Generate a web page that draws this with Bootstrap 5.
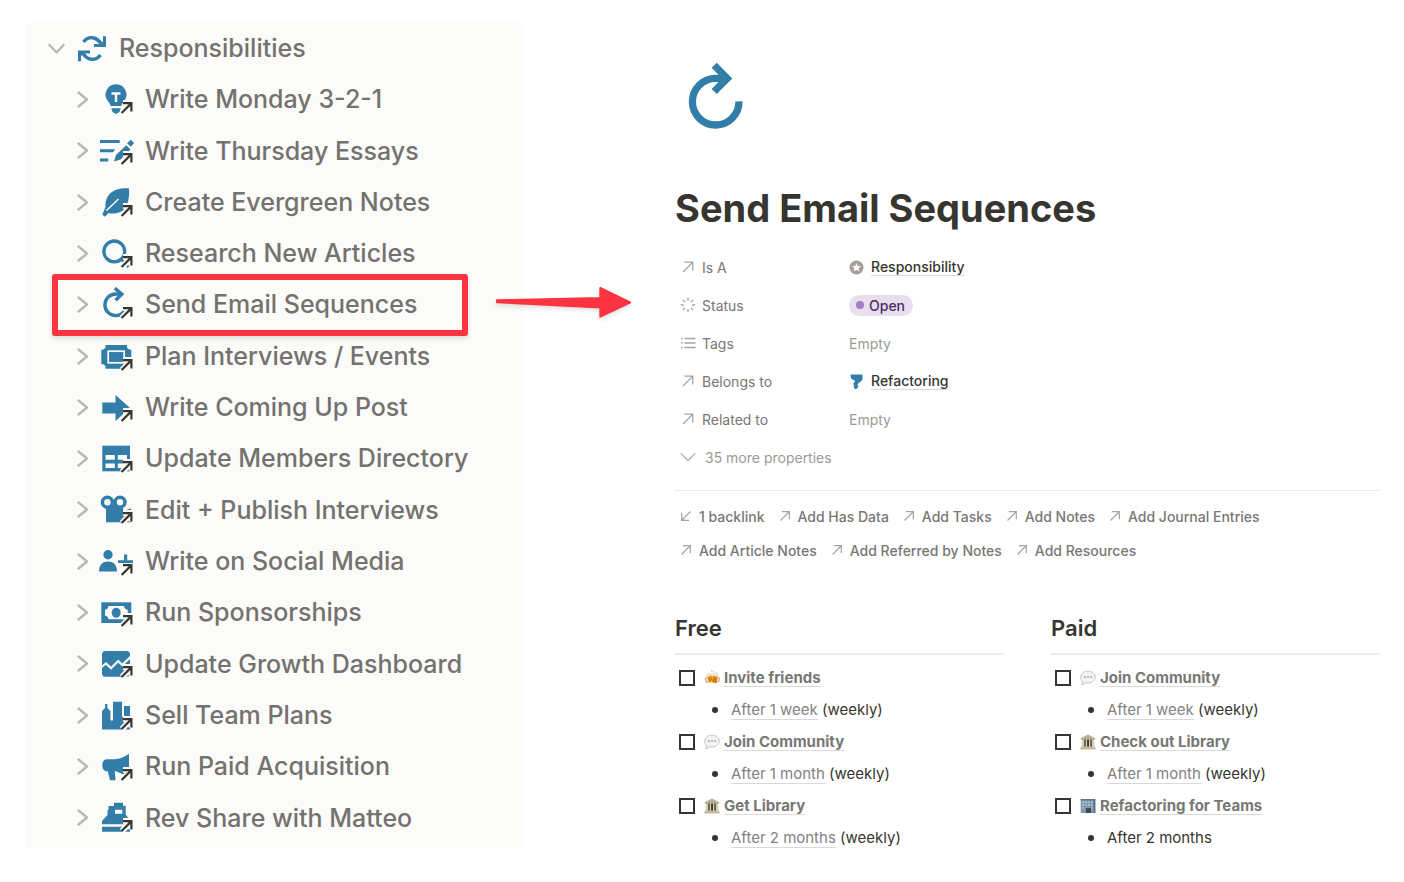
<!DOCTYPE html>
<html lang="en">
<head>
<meta charset="utf-8">
<meta name="viewport" content="width=device-width, initial-scale=1">
<title>Send Email Sequences</title>
<link href="https://cdn.jsdelivr.net/npm/bootstrap@5.3.0/dist/css/bootstrap.min.css" rel="stylesheet">
<style>
  :root { --ink: #37352f; --soft: #787774; --faint: #9b9a97; --blue: #337ea9; --side: #fbfbfa; --line: #ebebea; --alert: #fc3441; }
  body { font-family: Inter, "Liberation Sans", sans-serif; color: var(--ink); background: #fff; font-size: 15px; }
  a { color: inherit; text-decoration: none; }
  svg { flex: none; display: block; }
  .workspace { display: grid; grid-template-columns: 497fr 150fr 706fr; padding: 23px 24px 0 27px; }
  .tree { background: var(--side); align-self: start; min-height: calc(100vh - 57px); padding-bottom: 4px; font-size: 25px; font-weight: 500; color: #73726e; }
  .tree-row { flex: 1 1 0; min-height: 42px; padding-left: 45px; white-space: nowrap; }
  .tree-row.root-row { padding-left: 17px; }
  .toggle { border: 0; padding: 0; background: none; width: 20px; margin-right: 6px; }
  .tree-row a { display: flex; align-items: center; gap: 11px; }
  .root-row a { margin-left: 7px; gap: 12px; }
  .blue { fill: var(--blue); stroke: none; }
  .blue-line { fill: none; stroke: var(--blue); }
  .gap-fill { fill: var(--side); }
  .gap-line { fill: none; stroke: var(--side); }
  .callout-box { position: absolute; inset: -6px 56px -5px 25px; border: 6px solid var(--alert); border-radius: 3px; box-shadow: 0 2px 5px rgba(0,0,0,.14); pointer-events: none; }
  .callout-arrow { position: absolute; left: calc(100% - 29px); top: 5px; filter: drop-shadow(0 2px 2px rgba(0,0,0,.14)); }
  .doc { grid-column: 3; padding-top: 39px; }
  .doc-icon { margin-left: 14px; }
  .doc h1 { font-size: 38px; line-height: 48px; font-weight: 700; margin: 54px 0 16px 1px; }
  .props { margin: 0 0 14px; font-size: 14px; }
  .prop { display: grid; grid-template-columns: 169px 1fr; align-items: center; height: 38px; margin-left: 6px; }
  .prop dt { font-weight: 400; color: var(--soft); display: flex; align-items: center; gap: 6px; }
  .prop dd { margin: 0; display: flex; align-items: center; gap: 7px; font-weight: 500; }
  .prop dd.blank { font-weight: 400; color: var(--faint); }
  .prop dd a { line-height: 16px; }
  .under { border-bottom: 1px solid #d9d9d7; }
  .more { border: 0; background: none; padding: 0; height: 38px; margin-left: 6px; color: var(--faint); gap: 9px; }
  .pill { background: #e8deee; color: #492f64; height: 21px; padding: 0 8px 0 7px; border-radius: 11px; gap: 5px; font-weight: 500; }
  .dot { width: 8px; height: 8px; border-radius: 50%; background: #a27ec7; }
  .links { border-top: 1px solid var(--line); padding: 8px 0 0 6px; column-gap: 14px; font-size: 14px; font-weight: 500; color: var(--soft); }
  .links a { display: flex; align-items: center; gap: 7px; height: 34px; }
  .lists { display: grid; grid-template-columns: 1fr 1fr; gap: 46px; margin-top: 46px; }
  .lists h2 { font-size: 22px; line-height: 30px; font-weight: 600; margin: 0 0 7px; padding: 0 0 10px 1px; border-bottom: 2px solid #ededec; }
  .task { display: flex; align-items: center; height: 32px; padding-left: 5px; }
  .task input { appearance: none; width: 16px; height: 16px; border: 2px solid var(--ink); margin: 0 9px 0 0; border-radius: 0; }
  .task a { color: var(--soft); font-weight: 700; margin-left: 4px; line-height: 17px; }
  .step { margin: 0; padding-left: 57px; list-style: none; height: 32px; line-height: 32px; }
  .step li { position: relative; white-space: nowrap; }
  .step li::before { content: ""; position: absolute; left: -19px; top: 13px; width: 6px; height: 6px; border-radius: 50%; background: var(--ink); }
  .step a { color: #83827f; }
</style>
</head>
<body>
<svg width="0" height="0" class="position-absolute" aria-hidden="true">
  <symbol id="chev" viewBox="0 0 20 20"><path d="M6.500 2.500l8.500 7-8.500 7" fill="none" stroke="#b9b8b5" stroke-width="2.400" stroke-linejoin="round" stroke-linecap="round"/></symbol>
  <symbol id="badge" viewBox="0 0 36 36">
    <path d="M24 31L33.2 21.5M25 21H33.5V29.5" fill="none" stroke="#fbfbfa" stroke-width="6"/>
    <path d="M23.6 31L33 21.6M25 21.2H33.4V29.5" fill="none" stroke="#3a3733" stroke-width="2.2"/>
  </symbol>
  <symbol id="ne" viewBox="0 0 16 16"><path d="M3 13L12.5 3.5M4.5 3.2H12.8V11.5" fill="none" stroke="#a5a4a1" stroke-width="1.3"/></symbol>
  <symbol id="ne-s" viewBox="0 0 12 12"><path d="M1.500 10.500L10 2M2.800 1.700H10.300V9.200" fill="none" stroke="#a5a4a1" stroke-width="1.200"/></symbol>
  <symbol id="chat" viewBox="0 0 16 16"><path d="M8 1.200c4.200 0 7.300 2.600 7.300 5.900S12.200 13 8 13c-.8 0-1.600-.1-2.300-.3C4.800 13.800 3.400 14.700 1.800 14.800c.7-.9 1-1.900.9-3.200C1.400 10.500.7 8.900.7 7.100.7 3.800 3.800 1.200 8 1.200z" fill="#f4f4f4" stroke="#bdbdbd" stroke-width=".9"/><g fill="#666"><circle cx="5" cy="7" r=".8"/><circle cx="8" cy="7" r=".8"/><circle cx="11" cy="7" r=".8"/></g></symbol>
  <symbol id="library" viewBox="0 0 16 16"><path d="M8 .5L15.300 4.300V5.500H.7V4.300z" fill="#b8af94"/><rect x="2" y="5.500" width="12" height="7.500" fill="#3d382d"/><path d="M1.700 5.500h2.600v7.500H1.700zM5.700 5.500h1.400v7.500H5.700zM9 5.500h1.400v7.500H9zM11.800 5.500h2.600v7.500h-2.600z" fill="#d8cfb2"/><path d="M1.200 12.600h13.600v1.200h.9v1.700H.3v-1.700h.9z" fill="#c3baa0"/></symbol>
  <symbol id="beer" viewBox="0 0 16 16"><path d="M2.500 6l5-1.800 2.300 6.800-5 2z" fill="#f0a024"/><path d="M8.800 5l5.200 1.200-1.400 7.300-5-1.200z" fill="#e8901c"/><path d="M1.800 6.300C1 4.500 3.500 2.300 7.800 3.300l.2 1.900-5.500 2z" fill="#f3e4cc"/><path d="M8.300 4.500C9 1.500 13.500 1.500 14.800 4l-.5 2.900-5.600-1.300z" fill="#f3e6d0"/><path d="M3 8l-1.800.8 1.300 3.400 2-.7M13.800 7.800l1.700.4-.7 3.300-1.700-.3" fill="none" stroke="#c9a77c" stroke-width="1.100"/><path d="M4.800 7.600l1.300 4M6.500 7l.9 3M10.400 7.500L9.700 12M12.200 8l-.7 4.500" stroke="#a8640f" stroke-width=".8"/><path d="M7.500.5l.3 1.300M9.800.5l-.7 1.200" stroke="#d8a350" stroke-width=".8"/></symbol>
  <symbol id="office" viewBox="0 0 16 16"><path d="M.7 1h14.600v14H.7z" fill="#7e96ac"/><path d="M.7 1h14.600v1.300H.7z" fill="#66737f"/><path d="M2.500 3.500H4v1.500H2.500zM5.200 3.500h1.500v1.500H5.200zM8 3.500h1.500v1.500H8zM11 3.500h1.500v1.500H11zM2.500 6.300H4v1.500H2.500zM5.200 6.300h1.500v1.500H5.200zM8 6.300h1.500v1.500H8zM11 6.300h1.500v1.500H11zM2.500 9.200H4v1.500H2.500zM11 9.200h1.500v1.500H11z" fill="#bcd4e8"/><path d="M6 10h5v5H6z" fill="#3f4b57"/><path d="M13.500 2.300h1.800V15h-1.800z" fill="#5d6f80"/></symbol>
</svg>

<div class="workspace">
  <nav class="tree d-flex flex-column" aria-label="Pages">
    <div class="tree-row root-row d-flex align-items-center">
      <button class="toggle" type="button" aria-label="Collapse Responsibilities" aria-expanded="true"><svg width="24" height="20" viewBox="0 0 24 20"><path d="M5.500 6l7 7.500L19.500 6" fill="none" stroke="#b9b8b5" stroke-width="2.400" stroke-linejoin="round" stroke-linecap="round"/></svg></button>
      <a href="#"><svg width="30" height="30" viewBox="0 0 30 30"><g class="blue-line" stroke-width="3.400"><path d="M6.500 8C11 2 19 2 24 9.500"/><path d="M24 20C19 27 11 27 6.500 21.500" transform="matrix(-1 0 0 1 30 0)" opacity="0"/><path d="M6 19.500C11 27 19 27 23.500 21"/></g><path class="blue" d="M26 2.300h3V13H17v-3h6.500L26 7.500zM4 27.300H1V16.600h12v3H6.500L4 22.100z"/></svg>Responsibilities</a>
    </div>
    <div class="tree-row d-flex align-items-center">
      <button class="toggle" type="button" aria-label="Expand Write Monday 3-2-1"><svg width="20" height="20"><use href="#chev"/></svg></button>
      <a href="#"><svg width="36" height="36" viewBox="0 0 36 36"><path class="blue" d="M18 2.300a10.400 10.400 0 0 1 7.600 17.500c-1.500 1.700-1.900 2.600-2.100 4.200h-11c-.2-1.600-.6-2.500-2.100-4.200A10.400 10.400 0 0 1 18 2.300zM13.300 26.300h9.400l-1.200 3.600-3.500 2-3.500-2z"/><path class="gap-line" d="M13.500 11.500h9M18 11.500v8.500" stroke-width="2.400"/><use href="#badge"/></svg>Write Monday 3-2-1</a>
    </div>
    <div class="tree-row d-flex align-items-center">
      <button class="toggle" type="button" aria-label="Expand Write Thursday Essays"><svg width="20" height="20"><use href="#chev"/></svg></button>
      <a href="#"><svg width="36" height="36" viewBox="0 0 36 36"><path class="blue" d="M2 7h19.700v3H2zM2 16.300h15l-2 3H2zM2 25.400h8.300v3H2zM16 28.500l2-6.500L28.300 12.300l4.200 4.300L22.500 26.500zM33 6.800l3 3.400-3.200 3.600-3.800-3.600z"/><use href="#badge"/></svg>Write Thursday Essays</a>
    </div>
    <div class="tree-row d-flex align-items-center">
      <button class="toggle" type="button" aria-label="Expand Create Evergreen Notes"><svg width="20" height="20"><use href="#chev"/></svg></button>
      <a href="#"><svg width="36" height="36" viewBox="0 0 36 36"><path class="blue" d="M31 3.500C19 2.500 7 7 7.500 22L4.300 29.500 6.800 31.800 10.500 28C16 29.500 26 28 29 20.500 31 14 31.500 9 31 3.500z"/><path class="gap-line" d="M8.500 25.500L20.500 14" stroke-width="1.500"/><use href="#badge"/></svg>Create Evergreen Notes</a>
    </div>
    <div class="tree-row d-flex align-items-center">
      <button class="toggle" type="button" aria-label="Expand Research New Articles"><svg width="20" height="20"><use href="#chev"/></svg></button>
      <a href="#"><svg width="36" height="36" viewBox="0 0 36 36"><circle class="blue-line" cx="16.300" cy="15.400" r="10.400" stroke-width="3.300"/><path class="blue-line" d="M23 23l7.500 8" stroke-width="3"/><use href="#badge"/></svg>Research New Articles</a>
    </div>
    <div class="tree-row d-flex align-items-center position-relative">
      <button class="toggle" type="button" aria-label="Expand Send Email Sequences"><svg width="20" height="20"><use href="#chev"/></svg></button>
      <a href="#"><svg width="36" height="36" viewBox="0 0 36 36"><g class="blue-line" stroke-width="3.400"><path d="M28.500 18A10.800 10.800 0 1 1 17.700 7H23.500"/><path d="M16.800 1.200L23.800 7 17.600 13.200"/></g><use href="#badge"/></svg>Send Email Sequences</a>
      <span class="callout-box"></span>
      <svg class="callout-arrow" width="138" height="36" viewBox="0 0 138 36" aria-hidden="true"><path d="M2 15.300L105.300 13V3L135 17.500 105.300 31.700V22.500L2 17.300z" fill="#fc3441" stroke="#fc3441" stroke-width="2" stroke-linejoin="round"/></svg>
    </div>
    <div class="tree-row d-flex align-items-center">
      <button class="toggle" type="button" aria-label="Expand Plan Interviews / Events"><svg width="20" height="20"><use href="#chev"/></svg></button>
      <a href="#"><svg width="36" height="36" viewBox="0 0 36 36"><path class="blue" d="M7.500 6h21.500v2.500l1.500 1.800 2.800.5V25l-2.800.6-1.500 1.700v2.400H7.500v-2.400L6 25.600 3.300 25V10.800L6 10.300l1.500-1.800z"/><rect class="gap-line" x="10.200" y="12.200" width="16" height="11.600" stroke-width="1.700"/><use href="#badge"/></svg>Plan Interviews / Events</a>
    </div>
    <div class="tree-row d-flex align-items-center">
      <button class="toggle" type="button" aria-label="Expand Write Coming Up Post"><svg width="20" height="20"><use href="#chev"/></svg></button>
      <a href="#"><svg width="36" height="36" viewBox="0 0 36 36"><path class="blue" d="M4.300 12.500H17.500V5L32 18 17.500 31V23.500H4.300z"/><use href="#badge"/></svg>Write Coming Up Post</a>
    </div>
    <div class="tree-row d-flex align-items-center">
      <button class="toggle" type="button" aria-label="Expand Update Members Directory"><svg width="20" height="20"><use href="#chev"/></svg></button>
      <a href="#"><svg width="36" height="36" viewBox="0 0 36 36"><path class="blue" d="M4.300 4.700H32V30.300H4.300z"/><path class="gap-fill" d="M7.500 14h9.300v4.700H7.500zM19.800 14H29v4.700h-9.200zM7.500 22.400h9.300v4.700H7.500zM19.800 22.400H29v4.700h-9.200z"/><use href="#badge"/></svg>Update Members Directory</a>
    </div>
    <div class="tree-row d-flex align-items-center">
      <button class="toggle" type="button" aria-label="Expand Edit + Publish Interviews"><svg width="20" height="20"><use href="#chev"/></svg></button>
      <a href="#"><svg width="36" height="36" viewBox="0 0 36 36"><path class="blue" d="M8 14.500L12 13h8l5.500 1.500V18L33 16.500V30.200H8z"/><circle class="blue" cx="9.400" cy="10.200" r="6.700"/><circle class="blue" cx="22" cy="10.200" r="6.700"/><g class="gap-fill"><circle cx="9.400" cy="10.200" r="3.200"/><circle cx="22" cy="10.200" r="3.200"/></g><path class="gap-line" d="M27.500 15v7" stroke-width="4"/><use href="#badge"/></svg>Edit + Publish Interviews</a>
    </div>
    <div class="tree-row d-flex align-items-center">
      <button class="toggle" type="button" aria-label="Expand Write on Social Media"><svg width="20" height="20"><use href="#chev"/></svg></button>
      <a href="#"><svg width="36" height="36" viewBox="0 0 36 36"><circle class="blue" cx="10" cy="10.800" r="4.700"/><path class="blue" d="M1 27.500C1 20.500 4.800 17.400 10 17.400s9 3.100 9 10.100z"/><use href="#badge"/><path class="blue" d="M20 16.300h6V10.500h3.200v5.800H35V19H20z"/></svg>Write on Social Media</a>
    </div>
    <div class="tree-row d-flex align-items-center">
      <button class="toggle" type="button" aria-label="Expand Run Sponsorships"><svg width="20" height="20"><use href="#chev"/></svg></button>
      <a href="#"><svg width="36" height="36" viewBox="0 0 36 36"><path class="blue" d="M3.300 7.300h30V28h-30z"/><path class="gap-fill" d="M10.500 11h15.500c.3 2.200 1.500 3.400 3.700 3.700v6.100c-2.200.3-3.400 1.300-3.700 3.500H10.500c-.3-2.200-1.300-3.200-3.500-3.500v-6.100c2.200-.3 3.200-1.500 3.500-3.700z"/><ellipse class="blue" cx="18.200" cy="17.700" rx="4.500" ry="5"/><use href="#badge"/></svg>Run Sponsorships</a>
    </div>
    <div class="tree-row d-flex align-items-center">
      <button class="toggle" type="button" aria-label="Expand Update Growth Dashboard"><svg width="20" height="20"><use href="#chev"/></svg></button>
      <a href="#"><svg width="36" height="36" viewBox="0 0 36 36"><rect class="blue" x="4" y="5" width="28" height="25.700" rx="3.500"/><path class="gap-line" d="M3.500 21L8 17.500l5 4.800L20.200 15l4 4L33 10.500" stroke-width="2.200"/><use href="#badge"/></svg>Update Growth Dashboard</a>
    </div>
    <div class="tree-row d-flex align-items-center">
      <button class="toggle" type="button" aria-label="Expand Sell Team Plans"><svg width="20" height="20"><use href="#chev"/></svg></button>
      <a href="#"><svg width="36" height="36" viewBox="0 0 36 36"><path class="blue" d="M4 31.500V13l3-3V6h2.400v4l3 3V22.500H15V3.800h9V19h2V8h6V31.500z"/><use href="#badge"/></svg>Sell Team Plans</a>
    </div>
    <div class="tree-row d-flex align-items-center">
      <button class="toggle" type="button" aria-label="Expand Run Paid Acquisition"><svg width="20" height="20"><use href="#chev"/></svg></button>
      <a href="#"><svg width="36" height="36" viewBox="0 0 36 36"><path class="blue" d="M31 4.700V28L18 22.300h-1.300l.9 9H12L9.700 22.300H9c-3 0-4.700-2.300-4.700-6s1.700-6 4.700-6h7.500C22 10 27 7.500 31 4.700z"/><use href="#badge"/></svg>Run Paid Acquisition</a>
    </div>
    <div class="tree-row d-flex align-items-center">
      <button class="toggle" type="button" aria-label="Expand Rev Share with Matteo"><svg width="20" height="20"><use href="#chev"/></svg></button>
      <a href="#"><svg width="36" height="36" viewBox="0 0 36 36"><path class="blue" d="M16 2.700h9v3h2.700V14.500L32 20.500V24.300H4V21L9.500 15V6h6.500zM4 26.700h28v5H4z"/><path class="gap-fill" d="M17 9.700h7.300v4H17zM9 5.500h1.500V10H9z"/><use href="#badge"/></svg>Rev Share with Matteo</a>
    </div>
  </nav>

  <main class="doc">
    <svg class="doc-icon" width="56" height="68" viewBox="0 0 56 68" aria-hidden="true"><g class="blue-line" stroke-width="7.300"><path d="M51 39.400A23.300 23.300 0 1 1 27.700 16.400H38"/><path d="M26.200 3.200L39.200 16.400 26.200 29.500"/></g></svg>
    <h1>Send Email Sequences</h1>
    <dl class="props">
      <div class="prop"><dt><svg width="16" height="16"><use href="#ne"/></svg>Is A</dt><dd><svg width="15" height="15" viewBox="0 0 15 15"><circle cx="7.500" cy="7.500" r="7" fill="#a5a19a"/><path d="M7.500 3l1.300 2.900 3.200.3-2.400 2.100.7 3.100-2.800-1.600-2.800 1.600.7-3.100L3 6.200l3.200-.3z" fill="#fff"/></svg><a href="#" class="under">Responsibility</a></dd></div>
      <div class="prop"><dt><svg width="16" height="16" viewBox="0 0 16 16"><path d="M8 .8v3M8 12.200v3M.8 8h3M12.200 8h3M2.900 2.900L5 5M11 11l2.100 2.100M2.900 13.100L5 11M11 5l2.100-2.100" stroke="#a5a4a1" stroke-width="1.300"/></svg>Status</dt><dd><span class="pill d-inline-flex align-items-center"><span class="dot"></span>Open</span></dd></div>
      <div class="prop"><dt><svg width="16" height="16" viewBox="0 0 16 16"><path d="M4.500 3.500h11M4.500 8h11M4.500 12.500h11M1 3.500h1.600M1 8h1.600M1 12.500h1.600" stroke="#a5a4a1" stroke-width="1.300"/></svg>Tags</dt><dd class="blank">Empty</dd></div>
      <div class="prop"><dt><svg width="16" height="16"><use href="#ne"/></svg>Belongs to</dt><dd><svg width="15" height="15" viewBox="0 0 15 15"><path class="blue" d="M1.500 .5H13.500V5C13 7.500 11 8 9.500 9L8.500 11 9.500 12.500 7.500 15H6L4.500 12.800 5.500 11.500 4 10 6.300 7 2 4.500z"/></svg><a href="#" class="under">Refactoring</a></dd></div>
      <div class="prop"><dt><svg width="16" height="16"><use href="#ne"/></svg>Related to</dt><dd class="blank">Empty</dd></div>
      <div><button type="button" class="more d-flex align-items-center"><svg width="16" height="16" viewBox="0 0 16 16"><path d="M1 4.500l7 7 7-7" fill="none" stroke="#b0afac" stroke-width="1.300"/></svg>35 more properties</button></div>
    </dl>
    <div class="links d-flex flex-wrap">
      <a href="#"><svg width="12" height="12" viewBox="0 0 12 12"><path d="M10.500 1.500L2 10M1.700 2.800V10.300H9.200" fill="none" stroke="#a5a4a1" stroke-width="1.200"/></svg>1 backlink</a>
      <a href="#"><svg width="12" height="12"><use href="#ne-s"/></svg>Add Has Data</a>
      <a href="#"><svg width="12" height="12"><use href="#ne-s"/></svg>Add Tasks</a>
      <a href="#"><svg width="12" height="12"><use href="#ne-s"/></svg>Add Notes</a>
      <a href="#"><svg width="12" height="12"><use href="#ne-s"/></svg>Add Journal Entries</a>
      <a href="#"><svg width="12" height="12"><use href="#ne-s"/></svg>Add Article Notes</a>
      <a href="#"><svg width="12" height="12"><use href="#ne-s"/></svg>Add Referred by Notes</a>
      <a href="#"><svg width="12" height="12"><use href="#ne-s"/></svg>Add Resources</a>
    </div>
    <div class="lists">
      <section>
        <h2>Free</h2>
        <div class="task"><input type="checkbox" aria-labelledby="f1"><svg width="16" height="16"><use href="#beer"/></svg><a href="#" id="f1" class="under">Invite friends</a></div>
        <ul class="step"><li><a href="#" class="under">After 1 week</a> (weekly)</li></ul>
        <div class="task"><input type="checkbox" aria-labelledby="f2"><svg width="16" height="16"><use href="#chat"/></svg><a href="#" id="f2" class="under">Join Community</a></div>
        <ul class="step"><li><a href="#" class="under">After 1 month</a> (weekly)</li></ul>
        <div class="task"><input type="checkbox" aria-labelledby="f3"><svg width="16" height="16"><use href="#library"/></svg><a href="#" id="f3" class="under">Get Library</a></div>
        <ul class="step"><li><a href="#" class="under">After 2 months</a> (weekly)</li></ul>
      </section>
      <section>
        <h2>Paid</h2>
        <div class="task"><input type="checkbox" aria-labelledby="p1"><svg width="16" height="16"><use href="#chat"/></svg><a href="#" id="p1" class="under">Join Community</a></div>
        <ul class="step"><li><a href="#" class="under">After 1 week</a> (weekly)</li></ul>
        <div class="task"><input type="checkbox" aria-labelledby="p2"><svg width="16" height="16"><use href="#library"/></svg><a href="#" id="p2" class="under">Check out Library</a></div>
        <ul class="step"><li><a href="#" class="under">After 1 month</a> (weekly)</li></ul>
        <div class="task"><input type="checkbox" aria-labelledby="p3"><svg width="16" height="16"><use href="#office"/></svg><a href="#" id="p3" class="under">Refactoring for Teams</a></div>
        <ul class="step"><li>After 2 months</li></ul>
      </section>
    </div>
  </main>
</div>
<script src="https://cdn.jsdelivr.net/npm/bootstrap@5.3.0/dist/js/bootstrap.bundle.min.js"></script>
</body>
</html>
